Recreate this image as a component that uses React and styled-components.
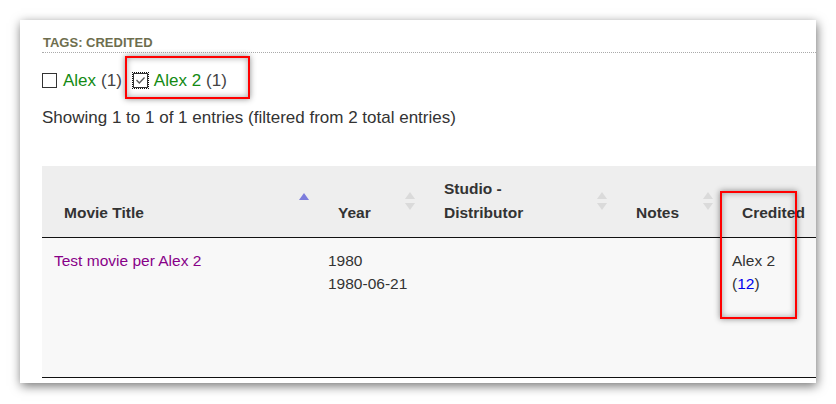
import React from "react";
import styled, { createGlobalStyle } from "styled-components";

const GlobalStyle = createGlobalStyle`
  body {
    margin: 0;
    background: #ffffff;
    font-family: "Liberation Sans", Arial, sans-serif;
  }
`;

const Page = styled.div`
  padding: 20px;
  width: 836px;
  height: 404px;
  box-sizing: border-box;
`;

const Panel = styled.div`
  position: relative;
  width: 796px;
  height: 363px;
  background: #fff;
  overflow: hidden;
  box-shadow: 1px 3px 10px rgba(0, 0, 0, 0.55);
`;

const Content = styled.div`
  padding: 16px 0 0 22px;
  width: 900px;
`;

const SectionTitle = styled.h3`
  margin: 0;
  font-size: 13px;
  font-weight: bold;
  color: #6e6e4e;
  text-transform: uppercase;
  padding: 0 0 2px 1px;
  line-height: 14px;
  border-bottom: 1px dotted #aaa;
`;

const TagRow = styled.div`
  display: flex;
  align-items: center;
  margin-top: 18px;
  font-size: 17px;
  line-height: 19px;
`;

const Tag = styled.label`
  display: flex;
  align-items: center;
  margin-right: 11px;
`;

const Box = styled.span`
  display: inline-flex;
  align-items: center;
  justify-content: center;
  width: 13px;
  height: 13px;
  border: 1px solid #333;
  background: #fff;
  margin-right: 6px;
  outline: ${(p) => (p.$checked ? "1px dotted #111" : "none")};
  outline-offset: 0;
`;

const TagName = styled.span`
  color: #138a13;
  margin-right: 5px;
`;

const Count = styled.span`
  color: #444;
`;

const Info = styled.div`
  margin-top: 18px;
  font-size: 17px;
  color: #333;
  line-height: 19px;
`;

const Table = styled.table`
  margin-top: 39px;
  border-collapse: collapse;
  font-size: 15.5px;
  color: #333;
`;

const Th = styled.th`
  position: relative;
  width: ${(p) => p.$w}px;
  box-sizing: border-box;
  height: 71px;
  padding: 0 18px 12px 22px;
  background: #eeeeee;
  text-align: left;
  vertical-align: bottom;
  font-weight: bold;
  line-height: 24px;
  border-bottom: 1px solid #111;
`;

const Td = styled.td`
  height: 128px;
  padding: 11px 12px 0 12px;
  background: #f8f8f8;
  vertical-align: top;
  line-height: 23px;
  border-bottom: 1px solid #111;
`;

const SortIcon = styled.span`
  position: absolute;
  right: 7px;
  top: 50%;
  transform: translateY(-50%);
  display: flex;
  flex-direction: column;
  gap: 4px;
`;

const ActiveIcon = styled(SortIcon)`
  transform: translateY(-8px);
`;

const Arrow = styled.span`
  width: 0;
  height: 0;
  border-left: 5px solid transparent;
  border-right: 5px solid transparent;
  ${(p) =>
    p.$down
      ? `border-top: 7px solid ${p.$color};`
      : `border-bottom: 7px solid ${p.$color};`}
`;

const TitleLink = styled.a`
  color: #880088;
  text-decoration: none;
`;

const NumLink = styled.a`
  color: #0000ee;
  text-decoration: none;
`;

const Highlight = styled.div`
  position: absolute;
  left: ${(p) => p.$x}px;
  top: ${(p) => p.$y}px;
  width: ${(p) => p.$w}px;
  height: ${(p) => p.$h}px;
  box-sizing: border-box;
  border: 2px solid #ff0000;
  box-shadow: 0 0 6px rgba(0, 0, 0, 0.45), inset 0 0 6px rgba(0, 0, 0, 0.35);
  pointer-events: none;
`;

const Sort = ({ active }) =>
  active ? (
    <ActiveIcon>
      <Arrow $color="#7c7cdc" />
    </ActiveIcon>
  ) : (
    <SortIcon>
      <Arrow $color="#dadada" />
      <Arrow $color="#dadada" $down />
    </SortIcon>
  );

const Check = () => (
  <svg width="11" height="11" viewBox="0 0 11 11">
    <path d="M1.5 5 L4.3 8 L9.5 2.5" fill="none" stroke="#555" strokeWidth="1.3" />
  </svg>
);

const columns = [
  { label: "Movie Title", w: 274, active: true },
  { label: "Year", w: 106 },
  { label: <>Studio -<br />Distributor</>, w: 192 },
  { label: "Notes", w: 106 },
  { label: "Credited", w: 130, noSort: true },
];

export default function App() {
  return (
    <>
      <GlobalStyle />
      <Page>
        <Panel>
          <Content>
            <SectionTitle>Tags: Credited</SectionTitle>
            <TagRow>
              <Tag>
                <Box />
                <TagName>Alex</TagName>
                <Count>(1)</Count>
              </Tag>
              <Tag>
                <Box $checked>
                  <Check />
                </Box>
                <TagName>Alex 2</TagName>
                <Count>(1)</Count>
              </Tag>
            </TagRow>
            <Info>Showing 1 to 1 of 1 entries (filtered from 2 total entries)</Info>
            <Table>
              <thead>
                <tr>
                  {columns.map((c, i) => (
                    <Th key={i} $w={c.w}>
                      {c.label}
                      {!c.noSort && <Sort active={c.active} />}
                    </Th>
                  ))}
                </tr>
              </thead>
              <tbody>
                <tr>
                  <Td>
                    <TitleLink href="#">Test movie per Alex 2</TitleLink>
                  </Td>
                  <Td>
                    1980
                    <br />
                    1980-06-21
                  </Td>
                  <Td />
                  <Td />
                  <Td>
                    Alex 2
                    <br />
                    (<NumLink href="#">12</NumLink>)
                  </Td>
                </tr>
              </tbody>
            </Table>
          </Content>
          <Highlight $x={105} $y={36} $w={125} $h={43} />
          <Highlight $x={700} $y={171} $w={77} $h={128} />
        </Panel>
      </Page>
    </>
  );
}
